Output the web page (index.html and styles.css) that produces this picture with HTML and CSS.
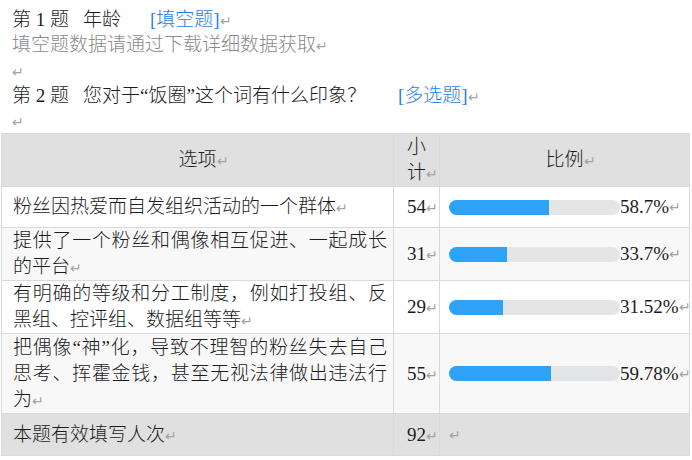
FILE: index.html
```html
<!DOCTYPE html>
<html lang="zh-CN">
<head>
<meta charset="utf-8">
<title>问卷结果</title>
<link rel="stylesheet" href="styles.css">
</head>
<body>
<div class="doc">
  <p class="line"><span>第 1 题</span><span class="q1">年龄</span><span class="tag t1">[填空题]</span><span class="pm">↵</span></p>
  <p class="line muted">填空题数据请通过下载详细数据获取<span class="pm">↵</span></p>
  <p class="line"><span class="pm">↵</span></p>
  <p class="line"><span>第 2 题</span><span class="q2">您对于“饭圈”这个词有什么印象？</span><span class="tag t2">[多选题]</span><span class="pm">↵</span></p>
  <p class="line"><span class="pm">↵</span></p>

  <table class="stats">
    <colgroup><col class="c1"><col class="c2"><col class="c3"></colgroup>
    <thead>
      <tr class="head">
        <th class="opt-h">选项<span class="pm">↵</span></th>
        <th class="num">小计<span class="pm">↵</span></th>
        <th class="ratio-h">比例<span class="pm">↵</span></th>
      </tr>
    </thead>
    <tbody>
      <tr class="r1">
        <td class="opt">粉丝因热爱而自发组织活动的一个群体<span class="pm">↵</span></td>
        <td class="num">54<span class="pm">↵</span></td>
        <td class="ratio"><div class="rc"><span class="bar"><span class="fill" style="width:58.7%"></span></span><span class="pct">58.7%</span><span class="pm">↵</span></div></td>
      </tr>
      <tr class="r2 alt">
        <td class="opt">提供了一个粉丝和偶像相互促进、一起成长的平台<span class="pm">↵</span></td>
        <td class="num">31<span class="pm">↵</span></td>
        <td class="ratio"><div class="rc"><span class="bar"><span class="fill" style="width:33.7%"></span></span><span class="pct">33.7%</span><span class="pm">↵</span></div></td>
      </tr>
      <tr class="r2">
        <td class="opt">有明确的等级和分工制度，例如打投组、反黑组、控评组、数据组等等<span class="pm">↵</span></td>
        <td class="num">29<span class="pm">↵</span></td>
        <td class="ratio"><div class="rc"><span class="bar"><span class="fill" style="width:31.52%"></span></span><span class="pct">31.52%</span><span class="pm">↵</span></div></td>
      </tr>
      <tr class="r3 alt">
        <td class="opt">把偶像“神”化，导致不理智的粉丝失去自己思考、挥霍金钱，甚至无视法律做出违法行为<span class="pm">↵</span></td>
        <td class="num">55<span class="pm">↵</span></td>
        <td class="ratio"><div class="rc"><span class="bar"><span class="fill" style="width:59.78%"></span></span><span class="pct">59.78%</span><span class="pm">↵</span></div></td>
      </tr>
      <tr class="foot">
        <td class="opt">本题有效填写人次<span class="pm">↵</span></td>
        <td class="num">92<span class="pm">↵</span></td>
        <td class="ratio"><div class="rc"><span class="pm">↵</span></div></td>
      </tr>
    </tbody>
  </table>
</div>
</body>
</html>
```
FILE: styles.css
```css
html, body {
  margin: 0;
  padding: 0;
  background: #ffffff;
}
body {
  font-family: "Liberation Serif", "Noto Sans CJK SC", serif;
  font-size: 19px;
  font-weight: 300;
  color: #1c1c1c;
}
.doc {
  padding-top: 7px;
}
.line {
  margin: 0;
  padding-left: 12px;
  line-height: 25.3px;
  height: 25.3px;
  white-space: nowrap;
}
.muted {
  color: #8a8a8a;
}
.q1 { margin-left: 14px; }
.q2 { margin-left: 14px; }
.t1 { margin-left: 29px; }
.t2 { margin-left: 32px; }
.tag {
  color: #1f7ee5;
}
.pm {
  font-family: "DejaVu Sans", sans-serif;
  font-size: 14px;
  line-height: 0;
  color: #a3a3a3;
}

.stats {
  margin-left: 1px;
  width: 688px;
  border-collapse: collapse;
  table-layout: fixed;
  border: 1px solid #dadada;
  line-height: 26px;
}
.c1 { width: 392px; }
.c2 { width: 46px; }
.c3 { width: 250px; }

.stats th, .stats td {
  border: 1px solid #dadada;
  padding: 0;
  vertical-align: middle;
  font-weight: 300;
}
.head {
  height: 52px;
  background: #e0e0e0;
}
.foot {
  height: 42px;
  background: #e0e0e0;
}
.r1 { height: 41px; }
.r2 { height: 52px; }
.r3 { height: 80px; }
.alt { background: #f8f8f8; }

.stats .opt-h {
  text-align: center;
  padding-left: 12px;
}
.stats .ratio-h {
  text-align: center;
  padding-left: 12px;
}
.stats .opt {
  padding: 0 6px 0 11px;
  text-align: justify;
}
.stats .num {
  text-align: left;
  padding: 0 0 0 13px;
}
.stats .ratio {
  padding: 0 0 0 9px;
  overflow: hidden;
}
.rc {
  display: flex;
  align-items: center;
  white-space: nowrap;
}
.bar {
  display: block;
  flex: 0 0 171px;
  width: 171px;
  height: 15px;
  border-radius: 8px;
  background: #e4e5e7;
  overflow: hidden;
}
.fill {
  display: block;
  height: 100%;
  background: #2ea2f8;
}
.rc .pm {
  line-height: 26px;
}
```
